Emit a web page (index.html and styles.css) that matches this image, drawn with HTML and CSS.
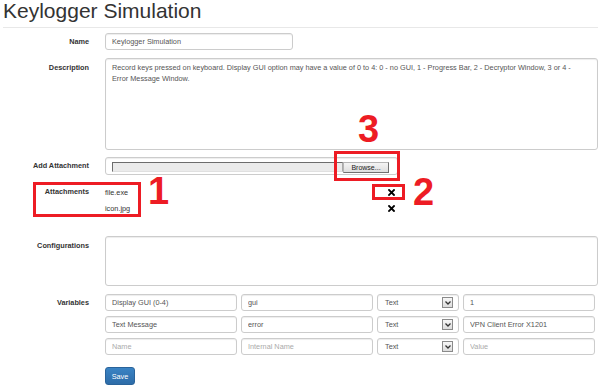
FILE: index.html
```html
<!DOCTYPE html>
<html lang="en">
<head>
    <meta charset="UTF-8">
    <meta name="viewport" content="width=device-width, initial-scale=1.0">
    <title>Keylogger Simulation</title>
    <link rel="stylesheet" href="styles.css">
</head>
<body>
    <div class="page">
        <h1 class="title">Keylogger Simulation</h1>
        <form class="form" onsubmit="return false;">
            <div class="row row-name">
                <label class="label">Name</label>
                <div class="field">
                    <input class="input name-input" type="text" value="Keylogger Simulation">
                </div>
            </div>
            <div class="row row-desc">
                <label class="label label-top">Description</label>
                <div class="field">
                    <textarea class="input area desc-area">Record keys pressed on keyboard. Display GUI option may have a value of 0 to 4: 0 - no GUI, 1 - Progress Bar, 2 - Decryptor Window, 3 or 4 - Error Message Window.</textarea>
                </div>
            </div>
            <div class="row row-add">
                <label class="label">Add Attachment</label>
                <div class="field">
                    <div class="file-box">
                        <span class="file-path"></span>
                        <span class="file-btn">Browse...</span>
                    </div>
                </div>
            </div>
            <div class="row row-files">
                <label class="label label-list">Attachments</label>
                <div class="field">
                    <ul class="file-list">
                        <li class="file-item">
                            <span>file.exe</span>
                            <svg class="remove" width="7" height="7" viewBox="0 0 7 7"><path d="M1 1L6 6M6 1L1 6" stroke="#000" stroke-width="1.8" stroke-linecap="square"/></svg>
                        </li>
                        <li class="file-item">
                            <span>icon.jpg</span>
                            <svg class="remove" width="7" height="7" viewBox="0 0 7 7"><path d="M1 1L6 6M6 1L1 6" stroke="#000" stroke-width="1.8" stroke-linecap="square"/></svg>
                        </li>
                    </ul>
                </div>
            </div>
            <div class="row row-conf">
                <label class="label label-top">Configurations</label>
                <div class="field">
                    <textarea class="input area conf-area"></textarea>
                </div>
            </div>
            <div class="row row-vars">
                <label class="label">Variables</label>
                <div class="field vars">
                    <input class="input" type="text" value="Display GUI (0-4)">
                    <input class="input" type="text" value="gui">
                    <div class="input select">Text<span class="select-arrow"><svg width="6" height="4" viewBox="0 0 6 4"><path d="M0.5 0.5L3 3L5.5 0.5" fill="none" stroke="#333" stroke-width="1.3"/></svg></span></div>
                    <input class="input" type="text" value="1">

                    <input class="input" type="text" value="Text Message">
                    <input class="input" type="text" value="error">
                    <div class="input select">Text<span class="select-arrow"><svg width="6" height="4" viewBox="0 0 6 4"><path d="M0.5 0.5L3 3L5.5 0.5" fill="none" stroke="#333" stroke-width="1.3"/></svg></span></div>
                    <input class="input" type="text" value="VPN Client Error X1201">

                    <input class="input" type="text" placeholder="Name">
                    <input class="input" type="text" placeholder="Internal Name">
                    <div class="input select">Text<span class="select-arrow"><svg width="6" height="4" viewBox="0 0 6 4"><path d="M0.5 0.5L3 3L5.5 0.5" fill="none" stroke="#333" stroke-width="1.3"/></svg></span></div>
                    <input class="input" type="text" placeholder="Value">
                </div>
            </div>
            <div class="row row-save">
                <div class="label"></div>
                <div class="field">
                    <button class="btn-save" type="submit">Save</button>
                </div>
            </div>
        </form>

        <!-- annotations drawn over the screenshot -->
        <div class="mark mark-1"></div>
        <div class="mark mark-2"></div>
        <div class="mark mark-3"></div>
        <span class="num num-1">1</span>
        <span class="num num-2">2</span>
        <span class="num num-3">3</span>
    </div>
</body>
</html>
```

FILE: styles.css
```css
body {
    margin: 0;
    background: #fff;
    font-family: "Liberation Sans", Arial, sans-serif;
    color: #333;
}
.page {
    position: relative;
    width: 600px;
    height: 388px;
    overflow: hidden;
}
.title {
    margin: 0 2px 0 3px;
    padding: 0 0 6px 0;
    font-size: 21px;
    line-height: 21px;
    font-weight: normal;
    color: #333;
    border-bottom: 1px solid #e8e8e8;
}
.form {
    margin: 0;
}
.row {
    display: flex;
}
.label {
    width: 89px;
    margin-right: 16px;
    flex-shrink: 0;
    text-align: right;
    font-size: 7.3px;
    font-weight: bold;
    line-height: 17px;
    color: #333;
}
.label-top {
    padding-top: 4px;
    line-height: 11px;
}
.field {
    flex: 1;
}
.input {
    box-sizing: border-box;
    display: block;
    height: 17px;
    margin: 0;
    padding: 0 6px;
    font-family: "Liberation Sans", Arial, sans-serif;
    font-size: 7.3px;
    color: #555;
    background: #fff;
    border: 1px solid #ccc;
    border-radius: 3px;
    box-shadow: inset 0 1px 1px rgba(0, 0, 0, 0.075);
    outline: none;
}
.input::placeholder {
    color: #aaa;
}
.row-name {
    margin-top: 5px;
}
.name-input {
    width: 188px;
}
.area {
    width: 493px;
    padding: 3px 20px 3px 6px;
    line-height: 11px;
    resize: none;
    overflow: hidden;
}
.row-desc {
    margin-top: 8px;
}
.desc-area {
    height: 92px;
}
.row-add {
    margin-top: 7px;
}
.row-add .label {
    line-height: 18px;
}
.file-box {
    box-sizing: border-box;
    display: flex;
    align-items: flex-start;
    width: 293px;
    height: 18px;
    padding: 4px 0 0 6px;
    border: 1px solid #ccc;
    border-radius: 3px;
    box-shadow: inset 0 1px 1px rgba(0, 0, 0, 0.075);
}
.file-path {
    box-sizing: border-box;
    width: 231px;
    height: 10px;
    background: #ebebeb;
    border-top: 1px solid #6d6d6d;
    border-left: 1px solid #6d6d6d;
    border-bottom: 1px solid #e0e0e0;
    border-right: 1px solid #aaa;
}
.file-btn {
    box-sizing: border-box;
    width: 46px;
    height: 11px;
    font-size: 7px;
    line-height: 9px;
    text-align: center;
    color: #222;
    background: linear-gradient(#f4f4f4, #dedede);
    border: 1px solid #b5b5b5;
    border-right-color: #707070;
    border-bottom-color: #707070;
}
.row-files {
    margin-top: 9px;
}
.label-list {
    line-height: 16px;
}
.file-list {
    list-style: none;
    margin: 0;
    padding: 0;
    width: 293px;
}
.file-item {
    display: flex;
    justify-content: space-between;
    align-items: center;
    height: 16px;
    padding-right: 3px;
    font-size: 7.3px;
    color: #333;
}
.row-conf {
    margin-top: 20px;
}
.conf-area {
    height: 50px;
}
.row-vars {
    margin-top: 8px;
}
.vars {
    display: grid;
    grid-template-columns: 132px 132px 82px 132px;
    column-gap: 4px;
    row-gap: 5px;
}
.vars .input {
    width: 100%;
}
.select {
    display: flex;
    align-items: center;
    justify-content: space-between;
    padding: 0 5px 0 7px;
    color: #555;
}
.select-arrow {
    box-sizing: border-box;
    display: flex;
    align-items: center;
    justify-content: center;
    width: 11px;
    height: 11px;
    background: linear-gradient(#f7f7f7, #dcdcdc);
    border: 1px solid #8a8a8a;
}
.row-save {
    margin-top: 12px;
}
.btn-save {
    display: block;
    width: 30px;
    height: 18px;
    padding: 0;
    font-family: "Liberation Sans", Arial, sans-serif;
    font-size: 7.3px;
    color: #fff;
    background: linear-gradient(#3a83c4, #2d6ca8);
    border: 1px solid #2a639a;
    border-radius: 3px;
    cursor: pointer;
}
.mark {
    position: absolute;
    box-sizing: border-box;
    border: 3px solid #ed1c24;
}
.mark-1 {
    left: 33px;
    top: 182px;
    width: 108px;
    height: 35px;
}
.mark-2 {
    left: 372px;
    top: 184px;
    width: 33px;
    height: 16px;
}
.mark-3 {
    left: 334px;
    top: 151px;
    width: 66px;
    height: 30px;
}
.num {
    position: absolute;
    font-family: "Liberation Sans", Arial, sans-serif;
    font-weight: bold;
    font-size: 38px;
    line-height: 38px;
    color: #ed1c24;
}
.num-1 {
    left: 148px;
    top: 172px;
}
.num-2 {
    left: 413px;
    top: 173px;
}
.num-3 {
    left: 358px;
    top: 110px;
}
```
